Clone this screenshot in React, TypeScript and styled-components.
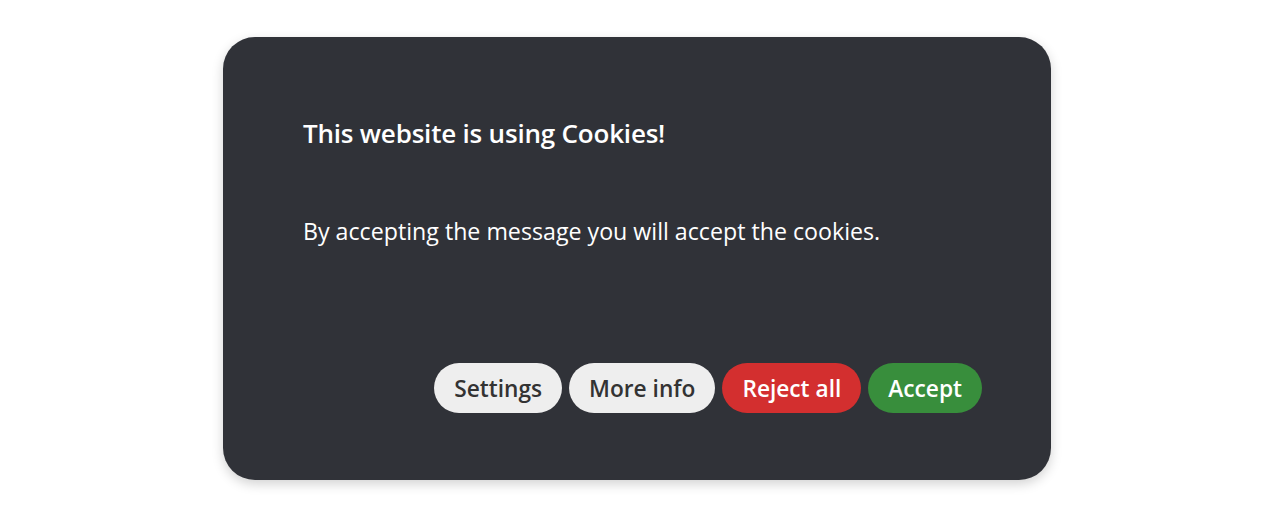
import styled, { createGlobalStyle } from 'styled-components';

const GlobalStyle = createGlobalStyle`
  html, body {
    margin: 0;
    padding: 0;
    background: #ffffff;
    font-family: "Open Sans", "Noto Sans", sans-serif;
  }
`;

const Page = styled.div`
  width: 1274px;
  height: 520px;
  padding-top: 37px;
  padding-left: 223px;
  box-sizing: border-box;
`;

const Card = styled.div`
  width: 828px;
  height: 443px;
  box-sizing: border-box;
  background: #303238;
  border-radius: 32px;
  box-shadow: 0 4px 12px rgba(0, 0, 0, 0.18);
  padding: 79px 69px 67px 80px;
  display: flex;
  flex-direction: column;
  color: #ffffff;
`;

const Title = styled.h2`
  margin: 0;
  font-size: 26px;
  font-weight: 600;
  line-height: 34px;
  letter-spacing: -0.2px;
`;

const Message = styled.p`
  margin: 66px 0 0;
  font-size: 23.2px;
  font-weight: 400;
  line-height: 30px;
`;

const Actions = styled.div`
  margin-top: auto;
  display: flex;
  justify-content: flex-end;
  gap: 7px;
`;

type Variant = 'light' | 'danger' | 'success';

const bg: Record<Variant, string> = {
  light: '#eeeeee',
  danger: '#d32f2f',
  success: '#388e3c',
};

const Button = styled.button<{ $variant: Variant }>`
  height: 50px;
  padding: 0 20px;
  border: none;
  border-radius: 25px;
  background: ${p => bg[p.$variant]};
  color: ${p => (p.$variant === 'light' ? '#333333' : '#ffffff')};
  font-family: "Open Sans", "Noto Sans", sans-serif;
  font-size: 22.7px;
  font-weight: 600;
  cursor: pointer;
`;

export default function App() {
  return (
    <>
      <GlobalStyle />
      <Page>
        <Card>
          <Title>This website is using Cookies!</Title>
          <Message>By accepting the message you will accept the cookies.</Message>
          <Actions>
            <Button $variant="light">Settings</Button>
            <Button $variant="light">More info</Button>
            <Button $variant="danger">Reject all</Button>
            <Button $variant="success">Accept</Button>
          </Actions>
        </Card>
      </Page>
    </>
  );
}
